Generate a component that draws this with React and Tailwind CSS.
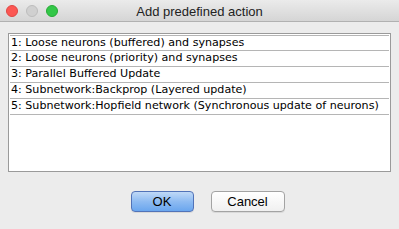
import React from 'react';

const items = [
  '1: Loose neurons (buffered) and synapses',
  '2: Loose neurons (priority) and synapses',
  '3: Parallel Buffered Update',
  '4: Subnetwork:Backprop (Layered update)',
  '5: Subnetwork:Hopfield network (Synchronous update of neurons)',
];

export default function App() {
  return (
    <div className="w-[399px] h-[229px] flex flex-col bg-[#ececec] overflow-hidden" style={{ fontFamily: '"Liberation Sans", Arial, sans-serif' }}>
      {/* Title bar */}
      <div className="relative h-[22px] shrink-0 flex items-center justify-center bg-gradient-to-b from-[#ebebeb] to-[#d5d5d5] border-b border-[#b1b1b1]">
        <div className="absolute left-[6px] top-[5px] flex gap-[8px]">
          <span className="w-[12px] h-[12px] rounded-full bg-[#fc5753] border border-[#df4744]" />
          <span className="w-[12px] h-[12px] rounded-full bg-[#d0d0d0] border border-[#bdbdbd]" />
          <span className="w-[12px] h-[12px] rounded-full bg-[#33c748] border border-[#27aa35]" />
        </div>
        <span className="text-[13px] text-[#222] leading-none pt-[1px]">Add predefined action</span>
      </div>

      {/* List */}
      <div className="mx-[8px] mt-[11px] h-[139px] bg-white border border-[#9a9a9a] px-[1px] pt-[1px]">
        {items.map((t, i) => (
          <div
            key={i}
            className={`h-[16px] flex items-center pl-[1px] text-[11.1px] text-black border-b border-[#b5b5b5] ${i === 0 ? 'border-t' : ''}`}
            style={{ fontFamily: '"DejaVu Sans", sans-serif' }}
          >
            {t}
          </div>
        ))}
      </div>

      {/* Buttons */}
      <div className="flex justify-center gap-[17px] mt-[19px] pl-[16px]">
        <button className="w-[63px] h-[21px] rounded-[4px] border border-[#5273b8] bg-gradient-to-b from-[#c0d9f7] via-[#8ebbf2] to-[#6aa6ee] text-[13px] text-black leading-none shadow-[0_1px_0_rgba(0,0,0,0.08)]">
          OK
        </button>
        <button className="w-[74px] h-[21px] rounded-[4px] border border-[#a3a3a3] bg-gradient-to-b from-white to-[#f0f0f0] text-[13px] text-black leading-none shadow-[0_1px_0_rgba(0,0,0,0.08)]">
          Cancel
        </button>
      </div>
    </div>
  );
}
